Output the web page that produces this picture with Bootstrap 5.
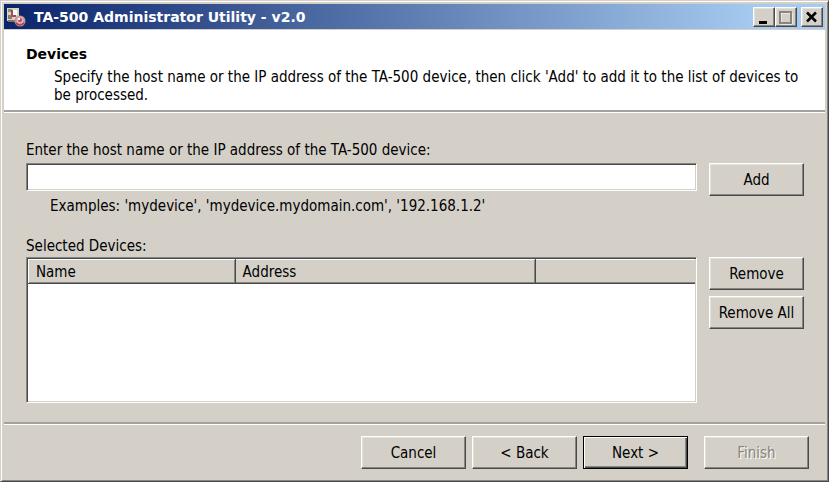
<!DOCTYPE html>
<html lang="en">
<head>
<meta charset="utf-8">
<meta name="viewport" content="width=device-width, initial-scale=1">
<title>TA-500 Administrator Utility - v2.0</title>
<link href="https://cdn.jsdelivr.net/npm/bootstrap@5.3.0/dist/css/bootstrap.min.css" rel="stylesheet">
<style>
:root { --face: #d4d0c8; --shade: #87857f; --dark: #48494a; }
body { font: 15px/18px "DejaVu Sans Condensed", Tahoma, "DejaVu Sans", sans-serif; color: #000; background: #fff; }
.win { background: var(--face); border: 1px solid; border-color: var(--face) var(--dark) var(--dark) var(--face);
  box-shadow: inset 1px 1px #fff, inset -1px -1px var(--shade); padding: 3px; }
.titlebar { height: 26px; padding: 0 2px; background: linear-gradient(90deg, #0a246a, #a6caf0 92%); color: #fff; border-bottom: 1px solid var(--face); }
.titlebar h1, .pagehead h2 { font-family: "DejaVu Sans", sans-serif; font-size: 14px; line-height: 20px; }
.raised, .raised:hover, .raised:active, .raised:disabled { font: inherit; color: #000; background: var(--face); border: 1px solid; border-radius: 0; padding: 0;
  border-color: #fff var(--dark) var(--dark) #fff !important; box-shadow: inset -1px -1px var(--shade), inset 1px 1px #e4e1dc; }
.capbtn { width: 22px; height: 20px; }
.capbtn svg { display: block; margin: 0 auto; }
.pagehead { background: #fff; padding: 14px 22px 6px; min-height: 80px; }
.pagehead h2 { margin-bottom: 4px; }
.pagehead p { padding-left: 28px; }
.etched { height: 3px; border-top: 2px solid #a3a19b; border-bottom: 1px solid #fff; }
.content-pane { padding: 28px 21px 19px 22px; }
.sunken { border: 1px solid; border-color: var(--shade) #fff #fff var(--shade) !important; border-radius: 0;
  box-shadow: inset 1px 1px var(--dark), inset -1px -1px var(--face) !important; background: #fff; }
.host { height: 28px; padding: 2px 6px; font: inherit; }
.side { width: 95px; gap: 6px; }
.side .raised { height: 33px; }
.devlist { height: 146px; padding: 1px; }
.devlist table { table-layout: fixed; }
.devlist th { font-weight: 400; height: 24px; line-height: 20px; padding: 0 7px; background: var(--face); border: 1px solid; border-color: #fff var(--dark) var(--dark) #fff;
  box-shadow: inset -1px -1px var(--shade); }
.devlist th:last-child { border-right: 0; box-shadow: inset 0 -1px var(--shade); }
.c-name { width: 31%; } .c-addr { width: 45%; }
.hint { padding: 6px 0 0 24px; }
.list-caption { padding-top: 22px; margin-bottom: 2px; }
.footbar { padding: 11px 16px 9px; gap: 6px; }
.footbar .raised { width: 105px; height: 33px; }
.footbar .preferred { margin-right: 10px; border-color: #000 !important; box-shadow: inset 1px 1px #fff, inset -1px -1px var(--dark), inset -2px -2px var(--shade); }
.raised:disabled { color: #87857f; text-shadow: 1px 1px #fff; opacity: 1; }
</style>
<script src="https://cdn.jsdelivr.net/npm/bootstrap@5.3.0/dist/js/bootstrap.bundle.min.js" defer></script>
</head>
<body>
<main class="win">
  <header class="titlebar d-flex align-items-center">
    <svg width="20" height="20" viewBox="0 0 20 20" aria-hidden="true">
      <path d="M1 1h12v13H1z" fill="#d8d6bd"/><path d="M2 2h4v3H2z" fill="#7c9a65"/>
      <path d="M5 3h5v7H5z" fill="#b04450"/><path d="M7 3h4v5H7z" fill="#fff"/>
      <path d="M2 8h4v4H2z" fill="#8c7777"/><path d="M2 13h8v2H2z" fill="#77736e"/>
      <circle cx="14" cy="14" r="5.500" fill="#c98e96"/><circle cx="14" cy="13" r="3.500" fill="#dcb4ba"/>
      <path d="M10 16q3 4 8 0" fill="none" stroke="#a8404e" stroke-width="1.500"/>
      <circle cx="14" cy="13" r="2" fill="#b64655"/><path d="M12 11h2v2h-2z" fill="#fff"/>
    </svg>
    <h1 class="fw-bold mb-0 ms-1 ps-1 me-auto">TA-500 Administrator Utility - v2.0</h1>
    <button type="button" class="btn raised capbtn" aria-label="Minimize"><svg width="18" height="16"><path d="M4 12h8v3H4z"/></svg></button>
    <button type="button" class="btn raised capbtn" aria-label="Maximize" disabled><svg width="18" height="16" fill="none"><path d="M4 4h11v11H4z" stroke="#fff"/><path d="M3 3h11v11H3z" stroke="#87857f" stroke-width="2"/></svg></button>
    <button type="button" class="btn raised capbtn ms-1" aria-label="Close"><svg width="18" height="16"><path d="M4 3.500l9 9M13 3.500l-9 9" stroke="#000" stroke-width="2.500"/></svg></button>
  </header>
  <section class="pagehead">
    <h2 class="fw-bold">Devices</h2>
    <p class="mb-0">Specify the host name or the IP address of the TA-500 device, then click 'Add' to add it to the list of devices to be processed.</p>
  </section>
  <div class="etched"></div>
  <form>
    <div class="content-pane">
      <label for="host" class="d-block mb-1">Enter the host name or the IP address of the TA-500 device:</label>
      <div class="d-flex gap-2">
        <div class="flex-grow-1 pe-1">
          <input id="host" type="text" class="form-control sunken host" aria-describedby="examples">
          <div id="examples" class="hint">Examples: 'mydevice', 'mydevice.mydomain.com', '192.168.1.2'</div>
        </div>
        <div class="side flex-shrink-0"><button type="button" class="btn raised w-100">Add</button></div>
      </div>
      <div id="listlabel" class="list-caption">Selected Devices:</div>
      <div class="d-flex gap-2">
        <div class="flex-grow-1 pe-1">
          <div class="sunken devlist">
            <table class="w-100" aria-labelledby="listlabel">
              <thead><tr><th class="c-name" scope="col">Name</th><th class="c-addr" scope="col">Address</th><th></th></tr></thead>
              <tbody></tbody>
            </table>
          </div>
        </div>
        <div class="side flex-shrink-0 d-flex flex-column">
          <button type="button" class="btn raised">Remove</button>
          <button type="button" class="btn raised">Remove All</button>
        </div>
      </div>
    </div>
    <div class="etched"></div>
    <footer class="footbar d-flex justify-content-end">
      <button type="button" class="btn raised">Cancel</button>
      <button type="button" class="btn raised">&lt; Back</button>
      <button type="button" class="btn raised preferred">Next &gt;</button>
      <button type="button" class="btn raised" disabled>Finish</button>
    </footer>
  </form>
</main>
</body>
</html>
